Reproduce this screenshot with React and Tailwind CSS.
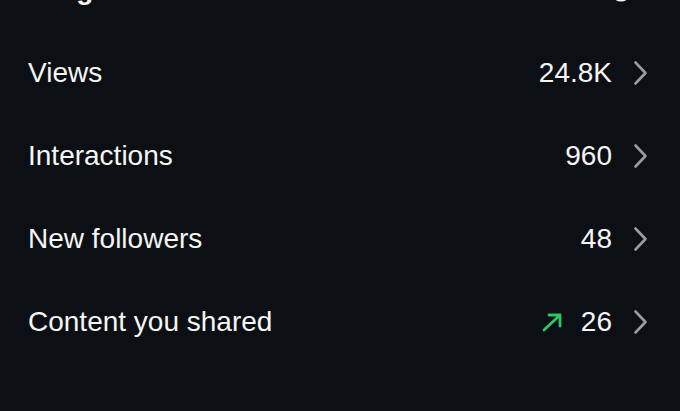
import React from 'react';

const rows = [
  { id: 'views', label: 'Views', value: '24.8K' },
  { id: 'interactions', label: 'Interactions', value: '960' },
  { id: 'followers', label: 'New followers', value: '48' },
  { id: 'content', label: 'Content you shared', value: '26', trend: true },
];

function Chevron() {
  return (
    <svg width="15" height="26" viewBox="0 0 15 26" fill="none" className="shrink-0">
      <path d="M2.5 2.5 L12.5 13 L2.5 23.5" stroke="#9a9b9d" strokeWidth="2.6" strokeLinecap="round" strokeLinejoin="round" />
    </svg>
  );
}

function TrendUp() {
  return (
    <svg width="22" height="20" viewBox="0 0 22 20" fill="none" className="shrink-0">
      <path d="M3 18 L19 3 M8 3 H19 V14" stroke="#2fc566" strokeWidth="2.8" strokeLinecap="round" strokeLinejoin="round" />
    </svg>
  );
}

export default function App() {
  return (
    <div className="w-[680px] h-[411px] overflow-hidden bg-[#0c1014] text-[#f5f5f5] font-['Liberation_Sans',Arial,sans-serif]">
      <div className="flex justify-between pl-[28px] pr-[48px] -mt-[26px] h-[32px]">
        <h1 className="text-[28px] leading-[32px] font-bold">Insights</h1>
        <svg width="22" height="22" viewBox="0 0 22 22" fill="none" className="self-end mb-[4px]">
          <circle cx="11" cy="11" r="9.5" stroke="#f5f5f5" strokeWidth="2" />
        </svg>
      </div>
      <ul className="mt-[25px]">
        {rows.map((row) => (
          <li key={row.id} className="flex items-center h-[83px] pl-[28px] pr-[32px]">
            <span className="flex-1 text-[28px] leading-[34px]">{row.label}</span>
            {row.trend && (
              <span className="mr-[18px]">
                <TrendUp />
              </span>
            )}
            <span className="text-[28px] leading-[34px]">{row.value}</span>
            <span className="ml-[21px]">
              <Chevron />
            </span>
          </li>
        ))}
      </ul>
    </div>
  );
}
